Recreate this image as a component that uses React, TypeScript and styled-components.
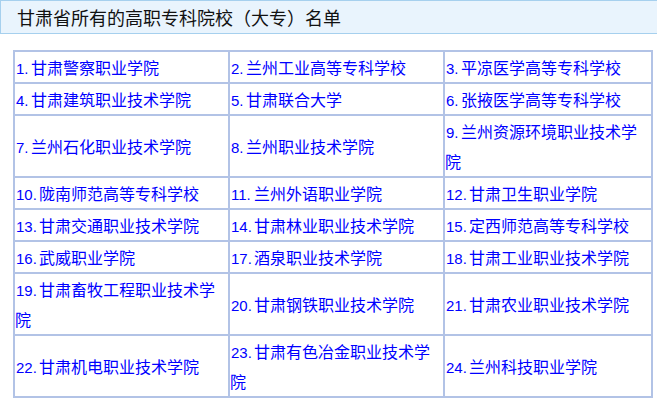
import React from 'react'
import styled, { createGlobalStyle } from 'styled-components'

const GlobalStyle = createGlobalStyle`
  body {
    margin: 0;
    background: #ffffff;
    font-family: "Noto Sans CJK SC", "Noto Sans", sans-serif;
  }
`

const TitleBar = styled.div`
  height: 32px;
  border: 1px solid #a6d0ee;
  border-right: none;
  background: #e9f4fd;
  padding-left: 16px;
  font-size: 18px;
  line-height: 32px;
  color: #111;
`

const Grid = styled.div`
  display: grid;
  grid-template-columns: 213px 213px 206px;
  gap: 2px;
  padding: 2px;
  width: 636px;
  margin: 16px 0 0 13px;
  background: #b2c3e6;
`

const Cell = styled.div`
  display: flex;
  align-items: center;
  min-height: 30px;
  background: #ffffff;
`

const Link = styled.a`
  display: block;
  width: 100%;
  font-size: 16px;
  line-height: 30px;
  color: #0000ff;
  text-decoration: none;
  word-break: break-all;
`

// half-width number, 8px per character like the bitmap font
const Num = styled.span<{ $chars: number }>`
  display: inline-block;
  width: ${(p) => p.$chars * 8}px;
  padding-left: 1px;
  box-sizing: border-box;
  font-family: "Liberation Sans", sans-serif;
  font-size: 15px;
  line-height: 14px;
  white-space: nowrap;
`

const schools = [
  '甘肃警察职业学院',
  '兰州工业高等专科学校',
  '平凉医学高等专科学校',
  '甘肃建筑职业技术学院',
  '甘肃联合大学',
  '张掖医学高等专科学校',
  '兰州石化职业技术学院',
  '兰州职业技术学院',
  '兰州资源环境职业技术学院',
  '陇南师范高等专科学校',
  '兰州外语职业学院',
  '甘肃卫生职业学院',
  '甘肃交通职业技术学院',
  '甘肃林业职业技术学院',
  '定西师范高等专科学校',
  '武威职业学院',
  '酒泉职业技术学院',
  '甘肃工业职业技术学院',
  '甘肃畜牧工程职业技术学院',
  '甘肃钢铁职业技术学院',
  '甘肃农业职业技术学院',
  '甘肃机电职业技术学院',
  '甘肃有色冶金职业技术学院',
  '兰州科技职业学院',
]

export default function App() {
  return (
    <>
      <GlobalStyle />
      <TitleBar>甘肃省所有的高职专科院校（大专）名单</TitleBar>
      <Grid>
        {schools.map((name, i) => {
          const num = `${i + 1}.`
          return (
            <Cell key={name}>
              <Link href="#">
                <Num $chars={num.length}>{num}</Num>
                {name}
              </Link>
            </Cell>
          )
        })}
      </Grid>
    </>
  )
}
